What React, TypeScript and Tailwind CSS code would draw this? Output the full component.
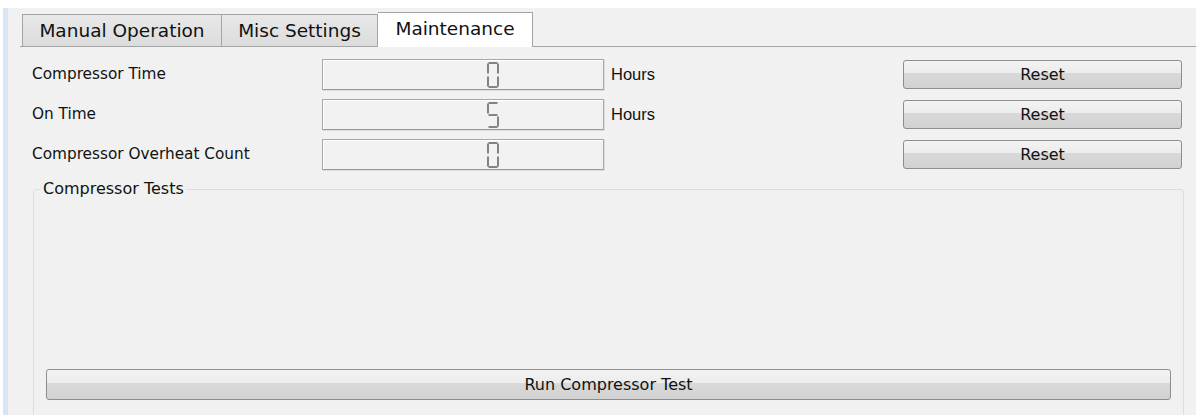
import type { ReactNode } from 'react'

const SEGS: Record<string, string[]> = {
  '0': ['a', 'b', 'c', 'd', 'e', 'f'],
  '5': ['a', 'f', 'g', 'c', 'd'],
}

const SEG_LINES: Record<string, [number, number, number, number]> = {
  a: [1.5, 1, 10.5, 1],
  b: [11, 1.5, 11, 11.5],
  c: [11, 14.5, 11, 24.5],
  d: [1.5, 25, 10.5, 25],
  e: [1, 14.5, 1, 24.5],
  f: [1, 1.5, 1, 11.5],
  g: [1.5, 13, 10.5, 13],
}

function LcdDigit({ d }: { d: string }) {
  return (
    <svg width="12" height="26" viewBox="0 0 12 26" className="block">
      {SEGS[d].map((s) => {
        const [x1, y1, x2, y2] = SEG_LINES[s]
        return <line key={s} x1={x1} y1={y1} x2={x2} y2={y2} stroke="#3a3a3a" strokeWidth="1.2" />
      })}
    </svg>
  )
}

function Lcd({ value }: { value: string }) {
  return (
    <div className="flex h-[31px] w-[282px] items-center justify-end border border-t-[#a9a9a9] border-l-[#a9a9a9] border-r-[#a9a9a9] border-b-[#9a9a9a] bg-[#f1f2f1] pr-[104px] shadow-[inset_1px_1px_0_#ffffff,1px_1px_0_#dcdcdc]">
      <LcdDigit d={value} />
    </div>
  )
}

function Button({ children, className }: { children: ReactNode; className: string }) {
  return (
    <button
      className={`rounded-[3px] border border-[#8e8e8e] bg-[linear-gradient(#f3f3f3_0%,#ececec_45%,#d9d9d9_46%,#d2d2d2_100%)] font-['DejaVu_Sans',sans-serif] text-[16px] text-[#111] ${className}`}
    >
      {children}
    </button>
  )
}

const rows = [
  { label: 'Compressor Time', value: '0', unit: 'Hours' },
  { label: 'On Time', value: '5', unit: 'Hours' },
  { label: 'Compressor Overheat Count', value: '0', unit: '' },
]

export default function App() {
  return (
    <div className="h-[415px] w-[1196px] overflow-hidden bg-white pl-[3px] pt-[8px]">
      <div className="h-full overflow-hidden border-l-[5px] border-[#d9e5f2] bg-[#f0f1f0] pl-[12px] font-['DejaVu_Sans',sans-serif] text-[#111]">
        {/* tab bar */}
        <div className="flex h-[39px] items-end border-b border-[#a4a4a4]">
          <div className="ml-[2px] flex h-[32px] w-[200px] items-center justify-center border border-b-0 border-[#a4a4a4] bg-[linear-gradient(#e8e8e8,#dcdcdc)] text-[18.5px]">
            Manual Operation
          </div>
          <div className="flex h-[32px] w-[156px] items-center justify-center border border-b-0 border-l-0 border-[#a4a4a4] bg-[linear-gradient(#e8e8e8,#dcdcdc)] text-[18.5px]">
            Misc Settings
          </div>
          <div className="relative -mb-px flex h-[35px] w-[155px] items-center justify-center border border-b-0 border-l-0 border-[#a4a4a4] bg-white pb-[2px] text-[18.5px]">
            Maintenance
          </div>
        </div>

        {/* counters */}
        <div className="flex flex-col gap-[9px] pl-[12px] pt-[12px]">
          {rows.map((r) => (
            <div key={r.label} className="flex h-[31px] items-center">
              <div className="w-[290px] text-[15.3px]">{r.label}</div>
              <Lcd value={r.value} />
              <div className="w-[299px] pl-[7px] font-['Liberation_Sans',sans-serif] text-[16.5px]">{r.unit}</div>
              <Button className="h-[29px] w-[279px]">Reset</Button>
            </div>
          ))}
        </div>

        {/* compressor test group */}
        <div className="relative ml-[13px] mr-[12px] mt-[19px] flex h-[300px] flex-col rounded-[3px] border border-[#d6dee8] px-[12px] pt-[179px]">
          <div className="absolute -top-[11px] left-[7px] bg-[#f0f1f0] px-[2px] text-[16px] leading-[20px]">
            Compressor Tests
          </div>
          <Button className="h-[31px] w-full">Run Compressor Test</Button>
        </div>
      </div>
    </div>
  )
}
